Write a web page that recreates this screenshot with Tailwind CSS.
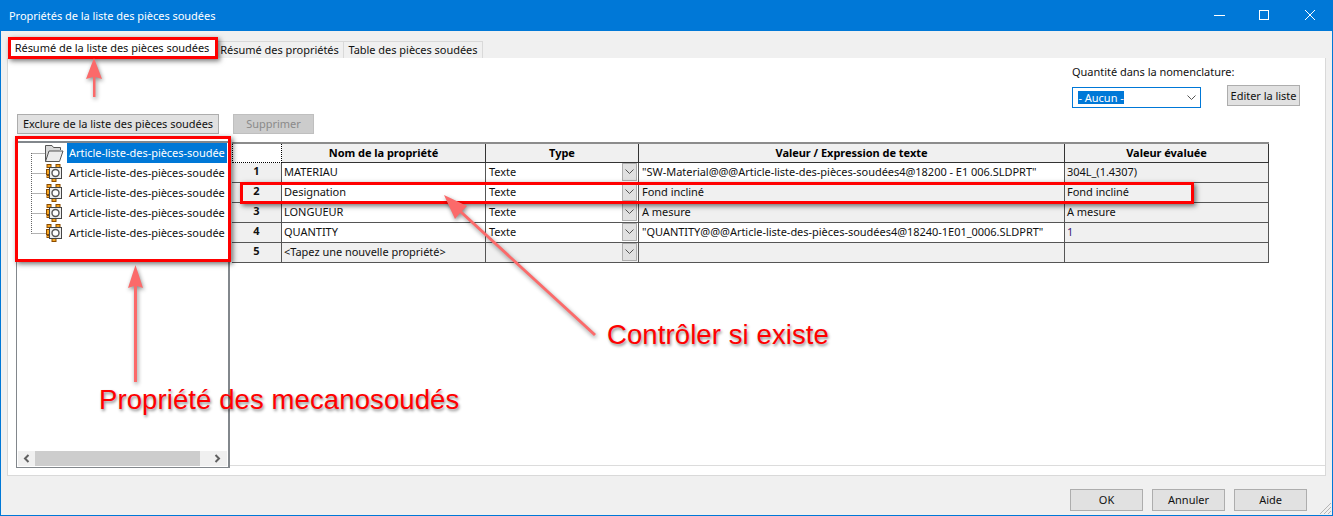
<!DOCTYPE html>
<html lang="fr">
<head>
    <meta charset="UTF-8">
    <title>Propriétés de la liste des pièces soudées</title>
    <script src="https://cdn.jsdelivr.net/npm/@tailwindcss/browser@4"></script>
</head>
<body class="m-0 overflow-hidden">
<div class="relative w-[1333px] h-[516px] flex flex-col bg-[#f0f0f0] border border-[#0078d7] border-t-0 font-['Noto_Sans',sans-serif] text-[11px] tracking-[-0.03px] text-[#111] overflow-hidden">

    <!-- title bar -->
    <div class="h-[31px] shrink-0 bg-[#0078d7] flex items-center pl-[8px] pt-[1px] text-white">
        <span>Propriétés de la liste des pièces soudées</span>
    </div>
    <svg class="absolute left-[1208px] top-[8px]" width="120" height="16" viewBox="0 0 120 16" fill="none" stroke="#fff">
        <path d="M5 7.5H16"/><rect x="50.5" y="2.5" width="9" height="9"/><path d="M96 2L106 12M106 2L96 12"/>
    </svg>

    <!-- tabs -->
    <div class="h-[27px] shrink-0 flex items-end pl-[7px]">
        <div class="h-[19px] w-[208px] bg-white border border-b-0 border-[#d9d9d9] flex items-center justify-center pb-[1px]">Résumé de la liste des pièces soudées</div>
        <div class="h-[17px] w-[128px] bg-[#f0f0f0] border border-b-0 border-l-0 border-[#d9d9d9] flex items-center justify-center">Résumé des propriétés</div>
        <div class="h-[17px] w-[139px] bg-[#f0f0f0] border border-b-0 border-l-0 border-[#d9d9d9] flex items-center justify-center">Table des pièces soudées</div>
    </div>

    <!-- panel -->
    <div class="h-[418px] shrink-0 mx-[6px] bg-white border border-t-0 border-[#d9d9d9] flex flex-col">
        <div class="h-[56px] shrink-0 flex justify-end">
            <div class="w-[229px] mr-[24px]">
                <div class="h-[14px] mt-[7px] leading-[14px]">Quantité dans la nomenclature:</div>
                <div class="flex items-start mt-[8px]">
                    <div class="w-[129px] h-[21px] border border-[#0078d7] flex items-center justify-between pl-[5px] pr-[4px]">
                        <span class="bg-[#0078d7] text-white h-[13px] leading-[13px] px-[0.5px]">- Aucun -</span>
                        <svg width="9" height="6" viewBox="0 0 9 6" fill="none" stroke="#555"><path d="M0.5 0.5L4.5 4.5L8.5 0.5"/></svg>
                    </div>
                    <div class="ml-[26px] -mt-[2px] w-[73px] h-[21px] pt-[1px] bg-[#e1e1e1] border border-[#adadad] flex items-center justify-center">Editer la liste</div>
                </div>
            </div>
        </div>
        <div class="h-[20px] mt-0 shrink-0 flex pl-[9px]">
            <div class="w-[202px] h-[20px] pt-[1px] bg-[#e1e1e1] border border-[#adadad] flex items-center justify-center">Exclure de la liste des pièces soudées</div>
            <div class="ml-[14px] w-[81px] h-[20px] pt-[1px] bg-[#cccccc] border border-[#bfbfbf] text-[#8a8a8a] flex items-center justify-center">Supprimer</div>
        </div>

        <div class="flex-1 flex mt-[7px] pl-[8px] items-stretch">
            <!-- tree -->
            <div class="w-[214px] h-[327px] shrink-0 relative flex flex-col border border-t-2 border-r-2 border-[#82878c] bg-white">
                <svg class="absolute left-[14px] top-[10px]" width="16" height="82" viewBox="0 0 16 82" fill="none" stroke="#666" stroke-dasharray="1 1"><path d="M0.5 0V80.5M0.5 0.5H15M0.5 20.5H15M0.5 40.5H15M0.5 60.5H15M0.5 80.5H15"/></svg>
                <div class="h-[20px] flex items-center pl-[27px]">
                    <svg class="shrink-0" width="20" height="20" viewBox="0 0 20 20"><path d="M1.5 18.5V2.5H8L9.5 4.5H16.5V7" fill="#d8d8d8" stroke="#555"/><path d="M1.5 18.5L5 8H19L15.5 18.5Z" fill="#ececec" stroke="#555"/></svg>
                    <span class="ml-[3px] w-[160px] h-[20px] leading-[20px] bg-[#0078d7] text-white pl-[2px] whitespace-nowrap">Article-liste-des-pièces-soudée</span>
                </div>
                <div class="h-[20px] flex items-center pl-[29px]">
                    <svg class="shrink-0" width="16" height="18" viewBox="0 0 16 18"><rect x="1" y="0.5" width="4" height="3" fill="#f5a623" stroke="#8a4b00"/><rect x="10" y="0.5" width="4" height="3" fill="#f5a623" stroke="#8a4b00"/><rect x="0.5" y="5.5" width="3" height="5" fill="#f5a623" stroke="#8a4b00"/><rect x="1" y="11.5" width="3" height="2" fill="#f5a623" stroke="#8a4b00"/><rect x="6" y="14.5" width="4" height="3" fill="#f5a623" stroke="#8a4b00"/><rect x="3.5" y="3.5" width="12" height="11" fill="#eee" stroke="#444"/><circle cx="9.5" cy="9" r="3.5" fill="#fff" stroke="#555" stroke-width="1.4"/></svg>
                    <span class="ml-[5px] pl-[2px] whitespace-nowrap">Article-liste-des-pièces-soudée</span>
                </div>
                <div class="h-[20px] flex items-center pl-[29px]">
                    <svg class="shrink-0" width="16" height="18" viewBox="0 0 16 18"><rect x="1" y="0.5" width="4" height="3" fill="#f5a623" stroke="#8a4b00"/><rect x="10" y="0.5" width="4" height="3" fill="#f5a623" stroke="#8a4b00"/><rect x="0.5" y="5.5" width="3" height="5" fill="#f5a623" stroke="#8a4b00"/><rect x="1" y="11.5" width="3" height="2" fill="#f5a623" stroke="#8a4b00"/><rect x="6" y="14.5" width="4" height="3" fill="#f5a623" stroke="#8a4b00"/><rect x="3.5" y="3.5" width="12" height="11" fill="#eee" stroke="#444"/><circle cx="9.5" cy="9" r="3.5" fill="#fff" stroke="#555" stroke-width="1.4"/></svg>
                    <span class="ml-[5px] pl-[2px] whitespace-nowrap">Article-liste-des-pièces-soudée</span>
                </div>
                <div class="h-[20px] flex items-center pl-[29px]">
                    <svg class="shrink-0" width="16" height="18" viewBox="0 0 16 18"><rect x="1" y="0.5" width="4" height="3" fill="#f5a623" stroke="#8a4b00"/><rect x="10" y="0.5" width="4" height="3" fill="#f5a623" stroke="#8a4b00"/><rect x="0.5" y="5.5" width="3" height="5" fill="#f5a623" stroke="#8a4b00"/><rect x="1" y="11.5" width="3" height="2" fill="#f5a623" stroke="#8a4b00"/><rect x="6" y="14.5" width="4" height="3" fill="#f5a623" stroke="#8a4b00"/><rect x="3.5" y="3.5" width="12" height="11" fill="#eee" stroke="#444"/><circle cx="9.5" cy="9" r="3.5" fill="#fff" stroke="#555" stroke-width="1.4"/></svg>
                    <span class="ml-[5px] pl-[2px] whitespace-nowrap">Article-liste-des-pièces-soudée</span>
                </div>
                <div class="h-[20px] flex items-center pl-[29px]">
                    <svg class="shrink-0" width="16" height="18" viewBox="0 0 16 18"><rect x="1" y="0.5" width="4" height="3" fill="#f5a623" stroke="#8a4b00"/><rect x="10" y="0.5" width="4" height="3" fill="#f5a623" stroke="#8a4b00"/><rect x="0.5" y="5.5" width="3" height="5" fill="#f5a623" stroke="#8a4b00"/><rect x="1" y="11.5" width="3" height="2" fill="#f5a623" stroke="#8a4b00"/><rect x="6" y="14.5" width="4" height="3" fill="#f5a623" stroke="#8a4b00"/><rect x="3.5" y="3.5" width="12" height="11" fill="#eee" stroke="#444"/><circle cx="9.5" cy="9" r="3.5" fill="#fff" stroke="#555" stroke-width="1.4"/></svg>
                    <span class="ml-[5px] pl-[2px] whitespace-nowrap">Article-liste-des-pièces-soudée</span>
                </div>
                <!-- horizontal scrollbar -->
                <div class="mt-auto mb-[1px] mx-[1px] h-[15px] bg-[#f0f0f0] flex items-center justify-between">
                    <svg class="w-[17px] shrink-0" width="17" height="15" viewBox="0 0 17 15" fill="none" stroke="#606060" stroke-width="2"><path d="M10.5 4L7 7.5L10.5 11"/></svg>
                    <div class="w-[165px] h-[15px] bg-[#cdcdcd]"></div>
                    <svg class="w-[27px] shrink-0" width="27" height="15" viewBox="0 0 27 15" fill="none" stroke="#606060" stroke-width="2"><path d="M15.5 4L19 7.5L15.5 11"/></svg>
                </div>
            </div>

            <!-- table pane -->
            <div class="flex-1 h-[325px] pl-[2px] border-b border-[#dcdcdc]">
                <div class="w-[1037px] mt-[1px] border-t-2 border-[#8c8c8c]">
                    <div class="grid grid-cols-[50px_204px_153px_426px_204px] h-[19px] font-bold bg-[#f0f0f0] text-black leading-[17px] text-center">
                        <div class="border border-dotted border-black border-t-0 bg-white"></div>
                        <div class="border-r border-b border-[#333]">Nom de la propriété</div>
                        <div class="border-r border-b border-[#333]">Type</div>
                        <div class="border-r border-b border-[#333]">Valeur / Expression de texte</div>
                        <div class="border-r border-b border-[#333]">Valeur évaluée</div>
                    </div>
                    <div class="grid grid-cols-[50px_204px_153px_426px_204px] h-[20px] leading-[17px]">
                        <div class="bg-[#f0f0f0] border-r border-b border-[#555] text-center font-bold leading-[15px]">1</div>
                        <div class="bg-white border-r border-b border-[#555] pl-[2px]">MATERIAU</div>
                        <div class="relative bg-white border-r border-b border-[#555] pl-[3px]">Texte<span class="absolute right-[1px] top-0 w-[15px] h-[18px] bg-[#e1e1e1] border border-[#adadad] flex items-center justify-center"><svg width="9" height="6" viewBox="0 0 9 6" fill="none" stroke="#555"><path d="M0.5 0.5L4.5 4.5L8.5 0.5"/></svg></span></div>
                        <div class="bg-white border-r border-b border-[#555] pl-[3px] whitespace-nowrap">"SW-Material@@@Article-liste-des-pièces-soudées4@18200 - E1 006.SLDPRT"</div>
                        <div class="bg-[#f0f0f0] border-r border-b border-[#555] pl-[2px]">304L_(1.4307)</div>
                    </div>
                    <div class="grid grid-cols-[50px_204px_153px_426px_204px] h-[20px] leading-[17px]">
                        <div class="bg-[#f0f0f0] border-r border-b border-[#555] text-center font-bold leading-[15px]">2</div>
                        <div class="bg-white border-r border-b border-[#555] pl-[2px]">Designation</div>
                        <div class="relative bg-white border-r border-b border-[#555] pl-[3px]">Texte<span class="absolute right-[1px] top-0 w-[15px] h-[18px] bg-[#e1e1e1] border border-[#adadad] flex items-center justify-center"><svg width="9" height="6" viewBox="0 0 9 6" fill="none" stroke="#555"><path d="M0.5 0.5L4.5 4.5L8.5 0.5"/></svg></span></div>
                        <div class="bg-[#f0f0f0] border-r border-b border-[#555] pl-[3px]">Fond incliné</div>
                        <div class="bg-[#f0f0f0] border-r border-b border-[#555] pl-[2px]">Fond incliné</div>
                    </div>
                    <div class="grid grid-cols-[50px_204px_153px_426px_204px] h-[20px] leading-[17px]">
                        <div class="bg-[#f0f0f0] border-r border-b border-[#555] text-center font-bold leading-[15px]">3</div>
                        <div class="bg-white border-r border-b border-[#555] pl-[2px]">LONGUEUR</div>
                        <div class="relative bg-white border-r border-b border-[#555] pl-[3px]">Texte<span class="absolute right-[1px] top-0 w-[15px] h-[18px] bg-[#e1e1e1] border border-[#adadad] flex items-center justify-center"><svg width="9" height="6" viewBox="0 0 9 6" fill="none" stroke="#555"><path d="M0.5 0.5L4.5 4.5L8.5 0.5"/></svg></span></div>
                        <div class="bg-[#f0f0f0] border-r border-b border-[#555] pl-[3px]">A mesure</div>
                        <div class="bg-[#f0f0f0] border-r border-b border-[#555] pl-[2px]">A mesure</div>
                    </div>
                    <div class="grid grid-cols-[50px_204px_153px_426px_204px] h-[20px] leading-[17px]">
                        <div class="bg-[#f0f0f0] border-r border-b border-[#555] text-center font-bold leading-[15px]">4</div>
                        <div class="bg-white border-r border-b border-[#555] pl-[2px]">QUANTITY</div>
                        <div class="relative bg-white border-r border-b border-[#555] pl-[3px]">Texte<span class="absolute right-[1px] top-0 w-[15px] h-[18px] bg-[#e1e1e1] border border-[#adadad] flex items-center justify-center"><svg width="9" height="6" viewBox="0 0 9 6" fill="none" stroke="#555"><path d="M0.5 0.5L4.5 4.5L8.5 0.5"/></svg></span></div>
                        <div class="bg-white border-r border-b border-[#555] pl-[3px] whitespace-nowrap">"QUANTITY@@@Article-liste-des-pièces-soudées4@18240-1E01_0006.SLDPRT"</div>
                        <div class="bg-[#f0f0f0] border-r border-b border-[#555] pl-[2px] text-[#3b1a78]">1</div>
                    </div>
                    <div class="grid grid-cols-[50px_204px_153px_426px_204px] h-[20px] leading-[17px]">
                        <div class="bg-[#f0f0f0] border-r border-b border-[#555] text-center font-bold leading-[15px]">5</div>
                        <div class="bg-[#f0f0f0] border-r border-b border-[#555] pl-[2px]">&lt;Tapez une nouvelle propriété&gt;</div>
                        <div class="relative bg-[#f0f0f0] border-r border-b border-[#555]"><span class="absolute right-[1px] top-0 w-[15px] h-[18px] bg-[#e1e1e1] border border-[#adadad] flex items-center justify-center"><svg width="9" height="6" viewBox="0 0 9 6" fill="none" stroke="#555"><path d="M0.5 0.5L4.5 4.5L8.5 0.5"/></svg></span></div>
                        <div class="bg-[#f0f0f0] border-r border-b border-[#555]"></div>
                        <div class="bg-[#f0f0f0] border-r border-b border-[#555]"></div>
                    </div>
                </div>
            </div>
        </div>
    </div>

    <!-- footer buttons -->
    <div class="flex-1 flex justify-end items-start pt-[13px] pr-[25px] gap-[9px]">
        <div class="w-[73px] h-[22px] bg-[#e1e1e1] border border-[#adadad] flex items-center justify-center">OK</div>
        <div class="w-[73px] h-[22px] bg-[#e1e1e1] border border-[#adadad] flex items-center justify-center">Annuler</div>
        <div class="w-[73px] h-[22px] bg-[#e1e1e1] border border-[#adadad] flex items-center justify-center">Aide</div>
    </div>
    <svg class="absolute right-0 bottom-0" width="13" height="13" viewBox="0 0 13 13" stroke="#b5b5b5" fill="none"><path d="M12 1L1 12M12 5L5 12M12 9L9 12"/></svg>

    <!-- annotations drawn over the dialog -->
    <div class="absolute left-[7px] top-[37px] w-[210px] h-[22px] border-[3px] border-[#ff0000] shadow-[2px_2px_5px_rgba(0,0,0,0.55)]"></div>
    <div class="absolute left-[14px] top-[136px] w-[216px] h-[126px] border-[3px] border-[#ff0000] shadow-[2px_2px_5px_rgba(0,0,0,0.55)]"></div>
    <div class="absolute left-[239px] top-[182px] w-[954px] h-[22px] border-[3px] border-[#ff0000] shadow-[2px_2px_5px_rgba(0,0,0,0.55)]"></div>

    <svg class="absolute left-0 top-0 pointer-events-none drop-shadow-[1px_2px_2px_rgba(0,0,0,0.45)]" width="1333" height="516" viewBox="0 0 1333 516" fill="#fb6a6a" stroke="none">
        <path d="M92 97L92 77L85 79L93 58L101 79L94.5 77L94.5 97Z"/>
        <path d="M133 382L133 286L127 288L134.5 265L142 288L136 286L136 382Z"/>
        <path d="M593 336L459 213L454 219L443 195L466 206L461 211L595 334Z"/>
    </svg>

    <div class="absolute left-[606px] top-[319px] font-['Liberation_Sans',sans-serif] text-[27.5px] leading-[32px] tracking-[0.1px] text-[#ff0000] [text-shadow:1px_2px_3px_rgba(0,0,0,0.45)] whitespace-nowrap">Contrôler si existe</div>
    <div class="absolute left-[98px] top-[384px] font-['Liberation_Sans',sans-serif] text-[27.5px] leading-[32px] tracking-[0.1px] text-[#ff0000] [text-shadow:1px_2px_3px_rgba(0,0,0,0.45)] whitespace-nowrap">Propriété des mecanosoudés</div>
</div>
</body>
</html>
